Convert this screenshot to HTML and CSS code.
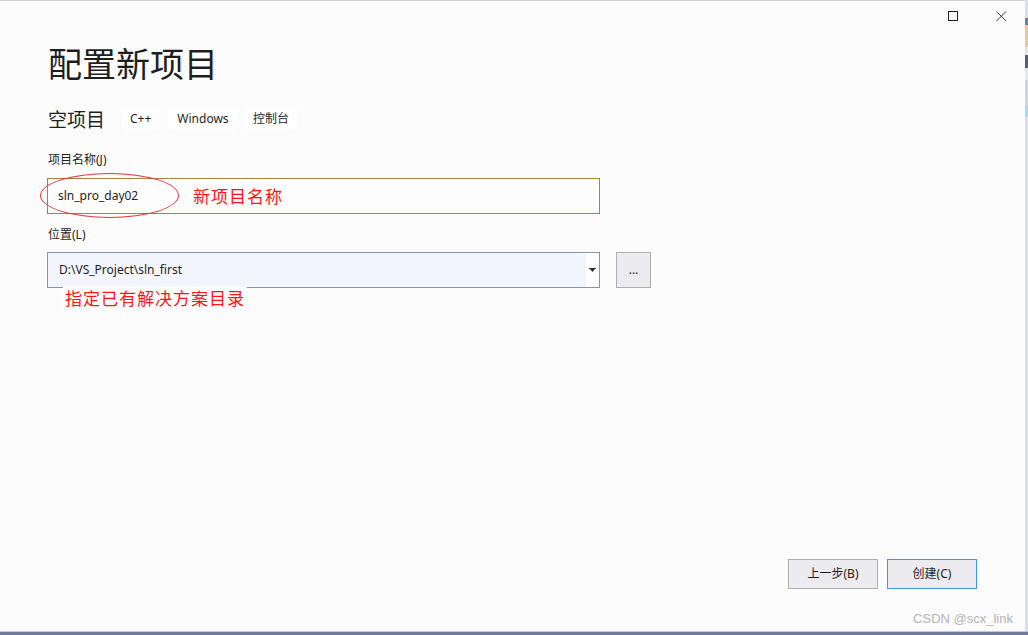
FILE: index.html
```html
<!DOCTYPE html>
<html lang="zh-CN">
<head>
<meta charset="utf-8">
<title>配置新项目</title>
<link rel="stylesheet" href="styles.css">
</head>
<body>
<div class="screen">
  <div class="row">
    <div class="window">
      <div class="titlebar">
        <div class="ctl">
          <svg width="11" height="11" viewBox="0 0 11 11"><rect x="0.5" y="0.5" width="9" height="9" fill="none" stroke="#1e1e1e" stroke-width="1"/></svg>
        </div>
        <div class="ctl">
          <svg width="11" height="11" viewBox="0 0 11 11"><path d="M0.5 0.5 L10 10 M10 0.5 L0.5 10" stroke="#3a3a3a" stroke-width="1" fill="none"/></svg>
        </div>
      </div>
      <div class="content">
        <h1 class="title">配置新项目</h1>
        <div class="subtitle">
          <span class="tmpl">空项目</span>
          <span class="tag tag-latin">C++</span>
          <span class="tag tag-latin">Windows</span>
          <span class="tag tag-cjk">控制台</span>
        </div>
        <div class="label label-name">项目名称(J)</div>
        <div class="field">
          <div class="input">sln_pro_day02</div>
          <div class="ellipse"></div>
          <div class="note note-name">新项目名称</div>
        </div>
        <div class="label label-loc">位置(L)</div>
        <div class="loc-row">
          <div class="combo">
            <div class="combo-text">D:\VS_Project\sln_first</div>
            <div class="combo-arrow">
              <svg width="7" height="5" viewBox="0 0 7 5"><path d="M0 0 H7 V1 H0 Z M1 1 H6 L3.5 4 Z" fill="#2a2f3a"/></svg>
            </div>
            <div class="note note-loc">指定已有解决方案目录</div>
          </div>
          <div class="browse">...</div>
        </div>
      </div>
      <div class="footer">
        <div class="btn">上一步(B)</div>
        <div class="btn btn-primary">创建(C)</div>
      </div>
      <div class="watermark">CSDN @scx_link</div>
    </div>
    <div class="side"></div>
  </div>
  <div class="bottom"></div>
</div>
</body>
</html>
```

FILE: styles.css
```css
html, body {
  margin: 0;
  padding: 0;
}
body {
  background: #d2d4e2;
  width: 1028px;
  height: 635px;
  overflow: hidden;
  font-family: "Noto Sans", "Noto Sans CJK SC", sans-serif;
  color: #1e1e1e;
}
.screen {
  display: flex;
  flex-direction: column;
}
.row {
  display: flex;
}
.window {
  position: relative;
  width: 1025px;
  height: 630px;
  border-top: 1px solid #cfd1df;
  background: #fcfcfc;
  display: flex;
  flex-direction: column;
}
.side {
  width: 3px;
  height: 631px;
  background: linear-gradient(to bottom,
    #dcdde8 0px, #dcdde8 18px,
    #6f7ea8 18px, #6f7ea8 25px,
    #e9c992 25px, #e9c992 47px,
    #e4e5ee 47px, #e4e5ee 55px,
    #5a5f70 55px, #5a5f70 68px,
    #e4e5ee 68px, #e4e5ee 80px,
    #cfd2e0 80px, #cfd2e0 106px,
    #a9d9f2 106px, #a9d9f2 117px,
    #dcdde8 117px, #dcdde8 631px);
}
.bottom {
  height: 4px;
  border-top: 1px solid #c5c7d7;
  background: #707aa0;
}
.titlebar {
  height: 31px;
  display: flex;
  justify-content: flex-end;
}
.ctl {
  width: 48px;
  height: 31px;
  display: flex;
  align-items: center;
  justify-content: center;
}
.content {
  padding: 0 48px;
  display: flex;
  flex-direction: column;
  align-items: flex-start;
}
.title {
  margin: 9px 0 0;
  font-family: "Noto Sans CJK SC", sans-serif;
  font-weight: 400;
  font-size: 34px;
  line-height: 44px;
  color: #1e1e1e;
}
.subtitle {
  margin-top: 23px;
  display: flex;
  align-items: center;
  height: 22px;
}
.tmpl {
  font-family: "Noto Sans CJK SC", sans-serif;
  font-size: 19px;
  line-height: 22px;
  margin-right: 16px;
}
.tag {
  background: #ffffff;
  border-radius: 4px;
  height: 22px;
  line-height: 22px;
  font-size: 12px;
  margin-right: 8px;
}
.tag-latin {
  padding: 0 9px;
}
.tag-cjk {
  padding: 0 7.5px;
}
.label {
  font-size: 12px;
  line-height: 18px;
}
.label-name {
  margin-top: 21px;
}
.label-loc {
  margin-top: 12px;
}
.field {
  position: relative;
  margin-top: 9px;
  margin-left: -1px;
}
.input {
  width: 531px;
  height: 34px;
  border: 1px solid #a78436;
  background: #fdfdfd;
  padding: 0 10px;
  font-size: 12px;
  line-height: 34px;
}
.ellipse {
  position: absolute;
  left: -7px;
  top: -5px;
  width: 137px;
  height: 43px;
  border: 1px solid #e5393b;
  border-radius: 50%;
}
.note {
  position: absolute;
  font-family: "Noto Sans CJK SC", sans-serif;
  color: #ff1414;
  font-size: 17px;
  letter-spacing: 1px;
  line-height: 21px;
  white-space: nowrap;
}
.note-name {
  left: 146px;
  top: 7px;
}
.loc-row {
  margin-top: 8px;
  margin-left: -1px;
  display: flex;
  gap: 16px;
}
.combo {
  position: relative;
  width: 551px;
  height: 34px;
  border: 1px solid #8a95a3;
  display: flex;
}
.combo-text {
  flex: 1;
  background: #f2f5fd;
  padding: 0 11px;
  font-size: 12px;
  line-height: 34px;
}
.combo-arrow {
  width: 13px;
  background: #ffffff;
  display: flex;
  align-items: center;
  justify-content: center;
}
.note-loc {
  left: 15px;
  top: 34px;
  background: #ffffff;
  padding: 0 2px;
}
.browse {
  width: 33px;
  height: 34px;
  border: 1px solid #adadad;
  background: #ecebf0;
  font-size: 12px;
  line-height: 34px;
  text-align: center;
}
.footer {
  margin-top: auto;
  display: flex;
  justify-content: flex-end;
  gap: 9px;
  padding: 0 48px 42px 0;
}
.btn {
  width: 88px;
  height: 28px;
  border: 1px solid #adadad;
  background: #ecebf0;
  font-size: 12px;
  line-height: 28px;
  text-align: center;
}
.btn-primary {
  border-color: #3d97f0;
}
.watermark {
  position: absolute;
  right: 12px;
  bottom: 5px;
  font-family: "Liberation Sans", Arial, sans-serif;
  font-size: 13px;
  color: #b3b3b3;
}
```
